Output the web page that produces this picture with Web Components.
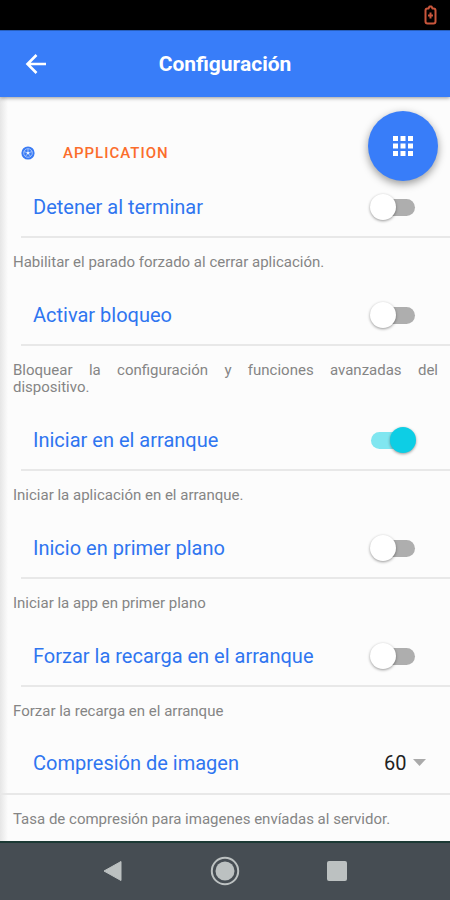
<!DOCTYPE html>
<html lang="es">
<head>
<meta charset="utf-8">
<meta name="viewport" content="width=device-width, initial-scale=1">
<title>Configuración</title>
<style>
html, body { margin: 0; height: 100%; }
body { font-family: Roboto, "Liberation Sans", sans-serif; background: #fcfcfc; }
</style>
</head>
<body>
<settings-screen></settings-screen>
<script>
const define = (name, html, setup) => {
  const template = document.createElement('template');
  template.innerHTML = html;
  customElements.define(name, class extends HTMLElement {
    constructor() {
      super();
      this.attachShadow({ mode: 'open' }).append(template.content.cloneNode(true));
    }
    connectedCallback() { if (setup) setup(this, this.shadowRoot); }
  });
};

define('status-bar', `
<style>
:host { display: flex; justify-content: flex-end; align-items: center; height: 30px; padding: 0 13px; background: #000; box-sizing: border-box; }
svg { display: block; }
</style>
<svg width="13" height="20" viewBox="0 0 13 20" fill="none" stroke="#c9563c" stroke-width="2" stroke-linejoin="round" role="img" aria-label="Batería">
  <path d="M3.500 3.500h1L5.500 1.500h2L8.500 3.500h1q2 0 2 2v11q0 2-2 2h-6q-2 0-2-2v-11q0-2 2-2z"/>
  <path d="M6.500 7.500v6M4 10.500h5"/>
</svg>`);

define('app-header', `
<style>
:host { display: grid; grid-template-columns: 48px 1fr 48px; align-items: center; height: 67px; padding: 0 12px; box-sizing: border-box; background: #387df9; color: #fff; border-top: 1px solid #285fbd; box-shadow: 0 1px 4px rgba(0,0,0,.4); position: relative; z-index: 1; }
button { width: 48px; height: 48px; padding: 0; border: 0; background: none; color: inherit; display: grid; place-items: center; }
h1 { margin: 0; text-align: center; font-size: 21px; line-height: 28px; font-weight: 700; }
</style>
<button type="button" aria-label="Volver"><svg width="22" height="22" viewBox="0 0 22 22" fill="none" stroke="currentColor" stroke-width="2.600"><path d="M21 11H3M11.500 2L2.500 11l9 9"/></svg></button>
<h1><slot></slot></h1>`);

define('section-title', `
<style>
:host { display: flex; align-items: center; gap: 28px; padding: 0 21px; height: 28px; }
h2 { margin: 0; font-size: 15px; line-height: 20px; font-weight: 500; letter-spacing: 1px; color: #fb6d2b; }
svg { flex: none; display: block; }
</style>
<svg width="14" height="14" viewBox="0 0 14 14" aria-hidden="true">
  <circle cx="7" cy="7" r="6.600" fill="#3a7bf4"/>
  <g fill="none" stroke="#a9c6fb" stroke-width=".9"><circle cx="7" cy="7" r="4.300"/><path d="M7 7V2.500M7 7l4.200-1.500M7 7l2.700 3.700M7 7l-2.700 3.700M7 7L2.800 5.500"/></g>
  <circle cx="7" cy="7" r="1.300" fill="#e6efff"/>
</svg>
<h2><slot></slot></h2>`);

const rowStyle = `
:host { display: block; }
.row { display: flex; align-items: center; justify-content: space-between; box-sizing: border-box; height: 59px; margin-left: 21px; padding: 0 34px 2px 12px; border-bottom: 2px solid #e8e8e8; }
label { font-size: 20px; line-height: 26px; color: #2f75f0; }
p { margin: 0; padding: 16px 12px 16px 13px; font-size: 15px; line-height: 17px; color: #858585; text-align: justify; }`;

define('toggle-setting', `
<style>${rowStyle}
input { appearance: none; position: relative; flex: none; width: 46px; height: 26px; margin: 0; }
input::before { content: ""; position: absolute; inset: 5px 1px 4px; border-radius: 9px; background: #aeaeae; }
input::after { content: ""; position: absolute; top: 0; left: 0; width: 26px; height: 26px; border-radius: 50%; background: #fff; box-shadow: 0 1px 3px rgba(0,0,0,.4); }
input:checked::before { background: #80e6f0; }
input:checked::after { left: auto; right: 0; background: #0dcee5; }
</style>
<div class="row"><label for="control"></label><input id="control" type="checkbox" role="switch" aria-describedby="help"></div>
<p id="help"><slot></slot></p>`, (host, root) => {
  root.querySelector('label').textContent = host.getAttribute('label');
  root.querySelector('input').checked = host.hasAttribute('checked');
});

define('select-setting', `
<style>${rowStyle}
.row { margin-left: 0; padding: 0 24px 4px 33px; }
.field { display: flex; align-items: center; position: relative; }
select { appearance: none; border: 0; margin: 0; padding: 0 18px 0 0; width: 42px; height: 28px; background: none; font: 20px/28px Roboto, sans-serif; color: #222; }
svg { position: absolute; right: 0; top: 10px; pointer-events: none; }
</style>
<div class="row"><label for="control"></label><span class="field"><select id="control" aria-describedby="help"></select><svg width="13" height="7" viewBox="0 0 13 7" aria-hidden="true"><path d="M0 0h13L6.500 7z" fill="#aaa"/></svg></span></div>
<p id="help"><slot></slot></p>`, (host, root) => {
  root.querySelector('label').textContent = host.getAttribute('label');
  root.querySelector('select').replaceChildren(new Option(host.getAttribute('value')));
});

define('menu-fab', `
<style>
:host { display: block; }
button { width: 70px; height: 70px; padding: 0; border: 0; border-radius: 50%; background: #387df9; color: #fff; display: grid; place-items: center; box-shadow: 0 3px 8px rgba(0,0,0,.4); }
</style>
<button type="button" aria-label="Menú"><svg width="20" height="20" viewBox="0 0 20 20" fill="currentColor"><path d="M0 0h5v5H0zM7.500 0h5v5h-5zM15 0h5v5h-5zM0 7.500h5v5H0zM7.500 7.500h5v5h-5zM15 7.500h5v5h-5zM0 15h5v5H0zM7.500 15h5v5h-5zM15 15h5v5h-5z"/></svg></button>`);

define('nav-bar', `
<style>
:host { display: grid; grid-template-columns: repeat(3, 1fr); height: 59px; padding: 0 57px 2px; box-sizing: border-box; background: #464d53; border-top: 2px solid #1c3a35; }
button { padding: 0; border: 0; background: none; display: grid; place-items: center; color: #bcc1c1; }
</style>
<button type="button" aria-label="Atrás"><svg width="30" height="30" viewBox="0 0 30 30"><path d="M6 15L23 5.500v19z" fill="currentColor" stroke="currentColor" stroke-linejoin="round"/></svg></button>
<button type="button" aria-label="Inicio"><svg width="30" height="30" viewBox="0 0 30 30"><circle cx="15" cy="15" r="13.200" fill="none" stroke="currentColor" stroke-width="2"/><circle cx="15" cy="15" r="9.500" fill="currentColor"/></svg></button>
<button type="button" aria-label="Recientes"><svg width="30" height="30" viewBox="0 0 30 30"><rect x="5" y="5" width="20" height="20" rx="2" fill="currentColor"/></svg></button>`);

define('settings-screen', `
<style>
:host { display: flex; flex-direction: column; height: 100vh; }
main { flex: 1 0 0; min-height: 0; overflow: hidden; position: relative; padding-top: 42px; background: linear-gradient(to right, #e6e6e6, #fcfcfc 8px); }
section-title { margin-bottom: 12px; }
menu-fab { position: absolute; right: 12px; top: 14px; }
</style>
<status-bar></status-bar>
<app-header>Configuración</app-header>
<main>
  <section-title>APPLICATION</section-title>
  <toggle-setting label="Detener al terminar">Habilitar el parado forzado al cerrar aplicación.</toggle-setting>
  <toggle-setting label="Activar bloqueo">Bloquear la configuración y funciones avanzadas del dispositivo.</toggle-setting>
  <toggle-setting label="Iniciar en el arranque" checked>Iniciar la aplicación en el arranque.</toggle-setting>
  <toggle-setting label="Inicio en primer plano">Iniciar la app en primer plano</toggle-setting>
  <toggle-setting label="Forzar la recarga en el arranque">Forzar la recarga en el arranque</toggle-setting>
  <select-setting label="Compresión de imagen" value="60">Tasa de compresión para imagenes envíadas al servidor.</select-setting>
  <menu-fab></menu-fab>
</main>
<nav-bar></nav-bar>`);
</script>
</body>
</html>
